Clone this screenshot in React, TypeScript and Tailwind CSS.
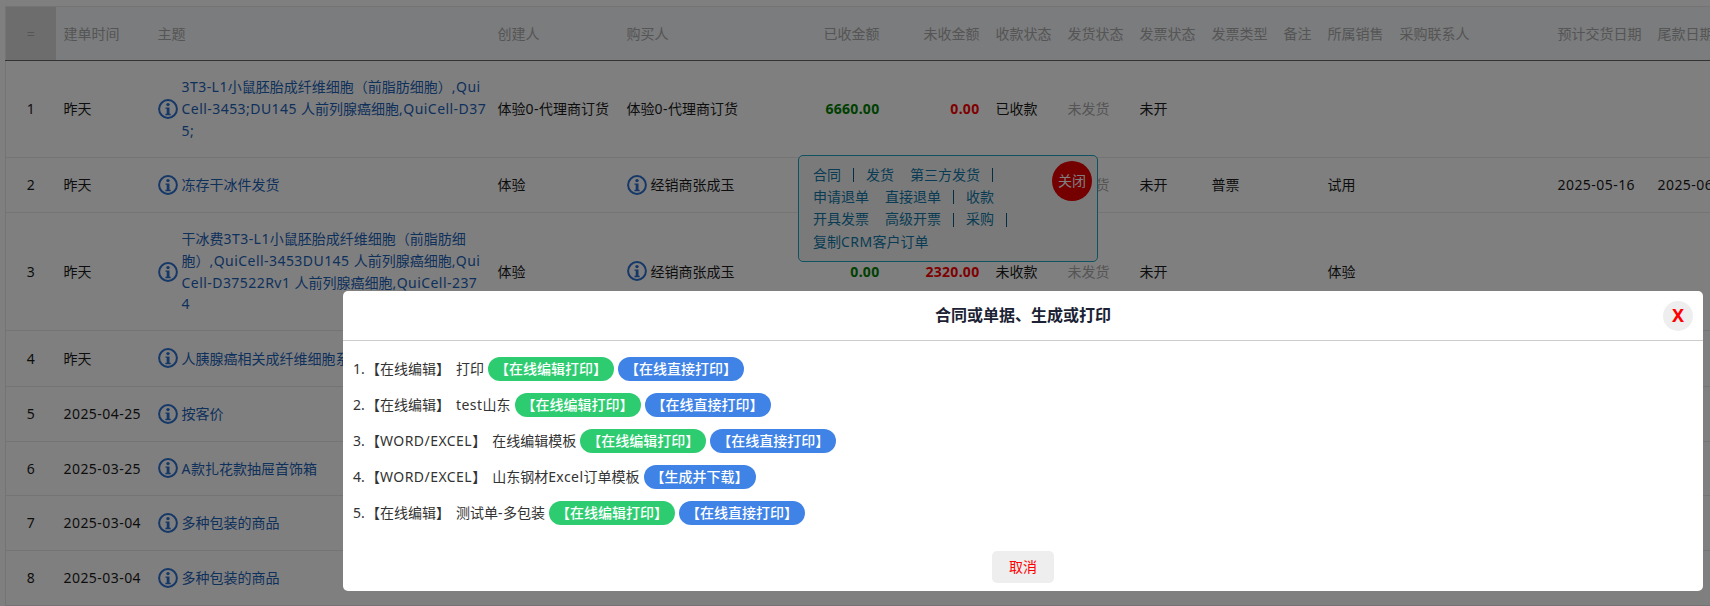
const columns = [
  { label: "=", w: "w-[50px]", cls: "text-center bg-[#dadada]" },
  { label: "建单时间", w: "w-[94px]", cls: "text-left" },
  { label: "主题", w: "w-[340px]", cls: "text-left" },
  { label: "创建人", w: "w-[129px]", cls: "text-left" },
  { label: "购买人", w: "w-[189px]", cls: "text-left" },
  { label: "已收金额", w: "w-[80px]", cls: "text-right" },
  { label: "未收金额", w: "w-[100px]", cls: "text-right" },
  { label: "收款状态", w: "w-[72px]", cls: "text-left" },
  { label: "发货状态", w: "w-[72px]", cls: "text-left" },
  { label: "发票状态", w: "w-[72px]", cls: "text-left" },
  { label: "发票类型", w: "w-[72px]", cls: "text-left" },
  { label: "备注", w: "w-[44px]", cls: "text-left" },
  { label: "所属销售", w: "w-[72px]", cls: "text-left" },
  { label: "采购联系人", w: "w-[158px]", cls: "text-left" },
  { label: "预计交货日期", w: "w-[100px]", cls: "text-left" },
  { label: "尾款日期", w: "w-[100px]", cls: "text-left" },
]

interface Row {
  no: number
  date: string
  subject: string[]
  h: string
  creator?: string
  buyer?: string
  buyerIcon?: boolean
  paid?: string
  unpaid?: string
  payStatus?: string
  shipStatus?: string
  invoiceStatus?: string
  invoiceType?: string
  sales?: string
  delivery?: string
  finalDate?: string
}

const rows: Row[] = [
  {
    no: 1,
    date: "昨天",
    subject: ["3T3-L1小鼠胚胎成纤维细胞（前脂肪细胞）,Qui", "Cell-3453;DU145 人前列腺癌细胞,QuiCell-D37", "5;"],
    h: "h-[97px]",
    creator: "体验0-代理商订货",
    buyer: "体验0-代理商订货",
    paid: "6660.00",
    unpaid: "0.00",
    payStatus: "已收款",
    shipStatus: "未发货",
    invoiceStatus: "未开",
  },
  {
    no: 2,
    date: "昨天",
    subject: ["冻存干冰件发货"],
    h: "h-[55px]",
    creator: "体验",
    buyer: "经销商张成玉",
    buyerIcon: true,
    shipStatus: "未发货",
    invoiceStatus: "未开",
    invoiceType: "普票",
    sales: "试用",
    delivery: "2025-05-16",
    finalDate: "2025-06-16",
  },
  {
    no: 3,
    date: "昨天",
    subject: ["干冰费3T3-L1小鼠胚胎成纤维细胞（前脂肪细", "胞）,QuiCell-3453DU145 人前列腺癌细胞,Qui", "Cell-D37522Rv1 人前列腺癌细胞,QuiCell-237", "4"],
    h: "h-[118px]",
    creator: "体验",
    buyer: "经销商张成玉",
    buyerIcon: true,
    paid: "0.00",
    unpaid: "2320.00",
    payStatus: "未收款",
    shipStatus: "未发货",
    invoiceStatus: "未开",
    sales: "体验",
  },
  { no: 4, date: "昨天", subject: ["人胰腺癌相关成纤维细胞系"], h: "h-[56px]" },
  { no: 5, date: "2025-04-25", subject: ["按客价"], h: "h-[55px]" },
  { no: 6, date: "2025-03-25", subject: ["A款扎花款抽屉首饰箱"], h: "h-[54px]" },
  { no: 7, date: "2025-03-04", subject: ["多种包装的商品"], h: "h-[55px]" },
  { no: 8, date: "2025-03-04", subject: ["多种包装的商品"], h: "h-[55px]" },
]

const printItems = [
  { type: "【在线编辑】", name: "打印", edit: true },
  { type: "【在线编辑】", name: "test山东", edit: true },
  { type: "【WORD/EXCEL】", name: "在线编辑模板", edit: true },
  { type: "【WORD/EXCEL】", name: "山东钢材Excel订单模板", edit: false },
  { type: "【在线编辑】", name: "测试单-多包装", edit: true },
]

// latin runs are set a little wider than the CJK text around them
function Mixed({ text }: { text?: string }) {
  if (!text) return null
  return (
    <>
      {text.split(/([\x20-\x7e]+)/).map((part, i) =>
        i % 2 === 1 ? (
          <span key={i} className="tracking-[0.45px]">
            {part}
          </span>
        ) : (
          part
        ),
      )}
    </>
  )
}

function InfoIcon() {
  return (
    <svg viewBox="0 0 20 20" className="w-5 h-5 shrink-0" fill="none">
      <circle cx="10" cy="10" r="8.9" stroke="#2a70d0" strokeWidth="2" />
      <circle cx="10" cy="5.6" r="1.7" fill="#2a70d0" />
      <path d="M7.5 8.4h4v6.4h1.2v1.5H7.4v-1.5h1.3V9.8H7.5z" fill="#2a70d0" />
    </svg>
  )
}

function Divider() {
  return <span className="w-px h-[14px] bg-[#0b5a8a] -ml-1 mr-3" />
}

function PanelLink({ children }: { children: string }) {
  return <span className="mr-4">{children}</span>
}

export default function App() {
  return (
    <div lang="zh-CN" className="relative h-screen overflow-hidden bg-white pl-[5px] pt-[6px] text-[14px] leading-[21.7px] text-[#1a1a1a] font-['Noto_Sans','Noto_Sans_CJK_SC',sans-serif]">
      <table className="table-fixed border-collapse w-[1744px] border-l border-t border-[#e8e8e8]">
        <thead>
          <tr className="h-[54px] bg-[#f6f8fb] border-b border-[#666]">
            {columns.map((col) => (
              <th key={col.label} className={`${col.w} ${col.cls} px-2 py-0 font-normal text-[#aaa] whitespace-nowrap`}>
                {col.label}
              </th>
            ))}
          </tr>
        </thead>
        <tbody>
          {rows.map((row) => (
            <tr key={row.no} className={`${row.h} border-b border-[#e8e8e8]`}>
              <td className="px-2 text-center">{row.no}</td>
              <td className="px-2 whitespace-nowrap"><Mixed text={row.date} /></td>
              <td className="px-2">
                <div className="flex items-center gap-1">
                  <InfoIcon />
                  <div className="text-[#1c62b8] whitespace-nowrap">
                    {row.subject.map((line) => (
                      <div key={line}><Mixed text={line} /></div>
                    ))}
                  </div>
                </div>
              </td>
              <td className="px-2 whitespace-nowrap"><Mixed text={row.creator} /></td>
              <td className="px-2 whitespace-nowrap">
                {row.buyerIcon ? (
                  <div className="flex items-center gap-1">
                    <InfoIcon />
                    <span>{row.buyer}</span>
                  </div>
                ) : (
                  <Mixed text={row.buyer} />
                )}
              </td>
              <td className="px-2 text-right font-bold text-[#008000] tracking-[0.3px]">{row.paid}</td>
              <td className="px-2 text-right font-bold text-[#ff0000] tracking-[0.3px]">{row.unpaid}</td>
              <td className="px-2 whitespace-nowrap">{row.payStatus}</td>
              <td className="px-2 whitespace-nowrap text-[#aaa]">{row.shipStatus}</td>
              <td className="px-2 whitespace-nowrap">{row.invoiceStatus}</td>
              <td className="px-2 whitespace-nowrap">{row.invoiceType}</td>
              <td className="px-2" />
              <td className="px-2 whitespace-nowrap">{row.sales}</td>
              <td className="px-2" />
              <td className="px-2 whitespace-nowrap"><Mixed text={row.delivery} /></td>
              <td className="px-2 whitespace-nowrap"><Mixed text={row.finalDate} /></td>
            </tr>
          ))}
        </tbody>
      </table>

      {/* action popover of row 2 */}
      <div className="absolute left-[798px] top-[155px] w-[300px] h-[107px] rounded-[5px] border border-[#1fa5c4] bg-[#f5f5f5] pl-[14px] pt-[8px] text-[#1279a8] leading-[22.2px]">
        <div className="flex items-center">
          <PanelLink>合同</PanelLink>
          <Divider />
          <PanelLink>发货</PanelLink>
          <PanelLink>第三方发货</PanelLink>
          <Divider />
        </div>
        <div className="flex items-center">
          <PanelLink>申请退单</PanelLink>
          <PanelLink>直接退单</PanelLink>
          <Divider />
          <PanelLink>收款</PanelLink>
        </div>
        <div className="flex items-center">
          <PanelLink>开具发票</PanelLink>
          <PanelLink>高级开票</PanelLink>
          <Divider />
          <PanelLink>采购</PanelLink>
          <Divider />
        </div>
        <div><Mixed text="复制CRM客户订单" /></div>
        <div className="absolute right-[5px] top-[5px] w-10 h-10 rounded-full bg-[#e80000] text-white flex items-center justify-center">
          关闭
        </div>
      </div>

      {/* dialog with backdrop */}
      <div className="fixed inset-0 bg-black/50 flex justify-end pt-[291px] pr-[7px]">
        <div className="w-[1360px] h-[300px] bg-white rounded-[5px] flex flex-col">
          <div className="h-[50px] shrink-0 relative flex items-center justify-center pt-px border-b border-[#ccc]">
            <span className="text-[16px] font-bold text-[#1a2233]">合同或单据、生成或打印</span>
            <div className="absolute right-[10px] top-[10px] w-[30px] h-[30px] rounded-full bg-[#eee] flex items-center justify-center text-[#ff0000] text-[18px] font-bold">
              X
            </div>
          </div>
          <div className="flex-1 pt-4 pl-[10px] flex flex-col gap-3 text-[#333]">
            {printItems.map((item, i) => (
              <div key={item.name} className="flex items-center h-6">
                <span className="w-[13px]">{i + 1}.</span>
                <span><Mixed text={item.type} /></span>
                <span className="ml-[6px] mr-1"><Mixed text={item.name} /></span>
                {item.edit && (
                  <span className="h-6 px-[7px] mr-1 rounded-full bg-[#2ecc71] text-white font-medium flex items-center">
                    【在线编辑打印】
                  </span>
                )}
                <span className="h-6 px-[7px] rounded-full bg-[#4083e6] text-white font-medium flex items-center">
                  {item.edit ? "【在线直接打印】" : "【生成并下载】"}
                </span>
              </div>
            ))}
          </div>
          <div className="flex justify-center pb-2">
            <div className="w-[62px] h-8 rounded-[5px] bg-[#eee] text-[#ff0000] flex items-center justify-center">取消</div>
          </div>
        </div>
      </div>
    </div>
  )
}
